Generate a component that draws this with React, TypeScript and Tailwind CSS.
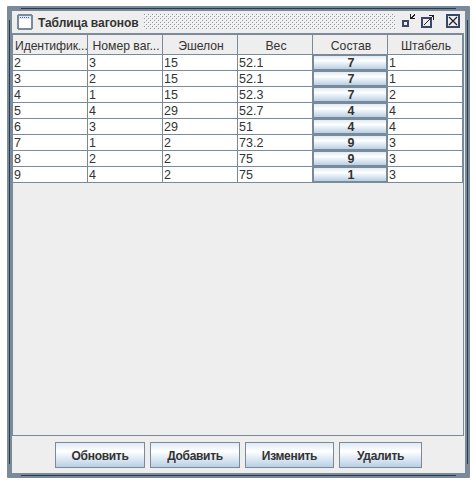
const columns = ['Идентифик...', 'Номер ваг...', 'Эшелон', 'Вес', 'Состав', 'Штабель'];

const rows = [
  ['2', '3', '15', '52.1', '7', '1'],
  ['3', '2', '15', '52.1', '7', '1'],
  ['4', '1', '15', '52.3', '7', '2'],
  ['5', '4', '29', '52.7', '4', '4'],
  ['6', '3', '29', '51', '4', '4'],
  ['7', '1', '2', '73.2', '9', '3'],
  ['8', '2', '2', '75', '9', '3'],
  ['9', '4', '2', '75', '1', '3'],
];

const actions = [
  { label: 'Обновить', width: 'w-[90px]' },
  { label: 'Добавить', width: 'w-[90px]' },
  { label: 'Изменить', width: 'w-[89px]' },
  { label: 'Удалить', width: 'w-[83px]' },
];

function TitleBar() {
  return (
    <div className="flex h-[22px] shrink-0 bg-[#eeeeee] pl-[5px] pr-[3px]">
      <svg className="mt-[3px] shrink-0" width="16" height="16" shapeRendering="crispEdges">
        <rect x="0" y="1" width="16" height="14" fill="#7a8a99" />
        <rect x="1" y="0" width="14" height="16" fill="#7a8a99" />
        <rect x="2" y="2" width="12" height="3" fill="#dce9f5" />
        <path d="M3 3.5h1M5 3.5h1M7 3.5h1M9 3.5h1M11 3.5h1" stroke="#50677e" />
        <rect x="2" y="5" width="12" height="9" fill="#fff" />
      </svg>
      <h1 className="ml-[5px] w-[106px] shrink-0 whitespace-nowrap text-[12px] font-bold leading-[24px] tracking-[-0.06px]">
        Таблица вагонов
      </h1>
      <svg className="mt-[3px] shrink-0" width="252" height="16" shapeRendering="crispEdges">
        <defs>
          <pattern id="bumps" width="4" height="4" patternUnits="userSpaceOnUse">
            <rect width="1" height="1" fill="#8f969d" />
            <rect x="2" y="2" width="1" height="1" fill="#8f969d" />
            <rect x="1" y="1" width="1" height="1" fill="#fff" />
            <rect x="3" y="3" width="1" height="1" fill="#fff" />
          </pattern>
        </defs>
        <rect width="252" height="16" fill="url(#bumps)" />
      </svg>
      <svg className="ml-[5px] mt-[3px] shrink-0" width="60" height="16" shapeRendering="crispEdges" fill="none">
        <path d="M2 7h5v5h-5z" stroke="#3a476b" strokeWidth="2" />
        <path d="M9.5 0v4M9 4.5h5M10 3.5h2M11 2.5h2M12 1.5h2M13 .5h1" stroke="#222" />
        <path d="M21 4h9v9h-9z" stroke="#3a476b" strokeWidth="2" />
        <path d="M23 10.5h1M24 9.5h1M25 8.5h1M26 7.5h1M27 6.5h1M28 5.5h1M29 4.5h1M30 3.5h1M31 2.5h1M28 1.5h5M32.5 1v5" stroke="#222" />
        <path d="M46 1h12v12h-12z" stroke="#3a476b" strokeWidth="2" />
        <path d="M48 3l8 8M56 3l-8 8" stroke="#222" strokeWidth="1.2" shapeRendering="auto" />
      </svg>
    </div>
  );
}

export default function App() {
  return (
    <main className="h-[483px] w-[476px] bg-white pl-[7px] pt-[6px] font-['Liberation_Sans',Arial,sans-serif] text-[#333333]">
      <section className="relative flex h-[472px] w-[463px] flex-col rounded-[1px] border-[5px] border-[#7a8a99] bg-[#eeeeee]">
        <i className="absolute -top-[3px] left-[9px] right-[9px] h-px bg-[#263b50]" />
        <i className="absolute -bottom-[3px] left-[9px] right-[9px] h-px bg-[#263b50]" />
        <i className="absolute -left-[3px] bottom-[9px] top-[9px] w-px bg-[#263b50]" />
        <i className="absolute -right-[3px] bottom-[9px] top-[9px] w-px bg-[#263b50]" />
        <TitleBar />
        <div className="mr-px flex h-[403px] shrink-0 flex-col border border-t-2 border-[#7a8a99]">
          <div className="grid h-5 shrink-0 grid-cols-6 border-b border-[#7a8a99]">
            {columns.map((name) => (
              <div key={name} className="overflow-hidden whitespace-nowrap border-r border-[#7a8a99] pl-[2px] text-center text-[12.2px] leading-[22px] first:tracking-[-0.12px]">
                {name}
              </div>
            ))}
          </div>
          {rows.map((row) => (
            <div key={row[0]} className="grid h-4 shrink-0 grid-cols-6 grid-rows-[16px] bg-white text-[12.5px] leading-4">
              {row.map((value, index) =>
                index === 4 ? (
                  <button key={index} className="-ml-px -mt-px border-2 border-[#7a8a99] bg-linear-to-b from-[#dfeaf4] via-white via-35% to-[#b8cfe5] pl-[2px] pt-px text-center text-[12.5px] font-bold leading-[13px]">
                    {value}
                  </button>
                ) : (
                  <div key={index} className="h-4 border-b border-r border-[#7a8a99] pl-px">
                    {value}
                  </div>
                ),
              )}
            </div>
          ))}
        </div>
        <div className="flex justify-center gap-[5px] pl-px pr-px pt-[6px]">
          {actions.map(({ label, width }) => (
            <button key={label} className={`${width} h-[26px] border border-[#7a8a99] bg-linear-to-b from-[#dfeaf4] via-white via-35% to-[#b8cfe5] pt-px text-[12px] font-bold leading-[25px] tracking-[-0.3px]`}>
              {label}
            </button>
          ))}
        </div>
      </section>
    </main>
  );
}
